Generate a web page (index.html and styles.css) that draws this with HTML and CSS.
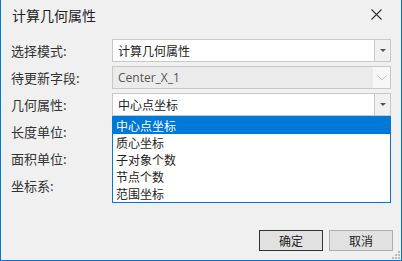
FILE: index.html
```html
<!DOCTYPE html>
<html>
<head>
    <meta charset="UTF-8">
    <title>计算几何属性</title>
    <link rel="stylesheet" href="styles.css">
</head>
<body>
    <div class="dialog">
        <div class="titlebar">
            <span class="title">计算几何属性</span>
            <svg class="close" width="11" height="11" viewBox="0 0 11 11">
                <path d="M0.5 0.5 L10.5 10.5 M10.5 0.5 L0.5 10.5" stroke="#333" stroke-width="1.1" fill="none"/>
            </svg>
        </div>
        <div class="form">
            <div class="row">
                <label>选择模式:</label>
                <div class="combo">
                    <div class="value">计算几何属性</div>
                    <div class="btn"><i class="tri"></i></div>
                </div>
            </div>
            <div class="row">
                <label>待更新字段:</label>
                <div class="combo disabled">
                    <div class="value">Center_X_1</div>
                    <div class="btn">
                        <svg width="10" height="6" viewBox="0 0 10 6"><path d="M0.5 0.5 L5 5 L9.5 0.5" stroke="#c4c4c4" fill="none"/></svg>
                    </div>
                </div>
            </div>
            <div class="row">
                <label>几何属性:</label>
                <div class="combo">
                    <div class="value">中心点坐标</div>
                    <div class="btn"><i class="tri"></i></div>
                </div>
            </div>
            <div class="row"><label>长度单位:</label></div>
            <div class="row"><label>面积单位:</label></div>
            <div class="row"><label>坐标系:</label></div>

            <!-- open list of the 几何属性 box -->
            <ul class="droplist">
                <li class="sel">中心点坐标</li>
                <li>质心坐标</li>
                <li>子对象个数</li>
                <li>节点个数</li>
                <li>范围坐标</li>
            </ul>
        </div>
        <div class="footer">
            <button type="button" class="default">确定</button>
            <button type="button">取消</button>
        </div>
        <svg class="grip" width="8" height="8" viewBox="0 0 8 8">
            <rect x="6" y="0" width="2" height="2" fill="#bbb"/>
            <rect x="3" y="3" width="2" height="2" fill="#bbb"/>
            <rect x="6" y="3" width="2" height="2" fill="#bbb"/>
            <rect x="0" y="6" width="2" height="2" fill="#bbb"/>
            <rect x="3" y="6" width="2" height="2" fill="#bbb"/>
            <rect x="6" y="6" width="2" height="2" fill="#bbb"/>
        </svg>
    </div>
</body>
</html>
```

FILE: styles.css
```css
body {
    margin: 0;
    background-color: #f0f0f0;
    font-family: "Noto Sans CJK SC", "Liberation Sans", sans-serif;
    color: #333;
}
.dialog {
    position: relative;
    width: 400px;
    height: 260px;
    border: 1px solid #0078d7;
    border-top: 0;
    background-color: #f0f0f0;
    display: flex;
    flex-direction: column;
}
.titlebar {
    height: 39px;
    display: flex;
    align-items: flex-start;
    justify-content: space-between;
    padding: 0 19px 0 11px;
}
.title {
    font-size: 14px;
    line-height: 30px;
    color: #222;
}
.close {
    margin-top: 9px;
}
.form {
    position: relative;
    padding: 0 10px 0 10px;
    display: flex;
    flex-direction: column;
    gap: 4px;
}
.row {
    display: flex;
    align-items: center;
    height: 23px;
}
label {
    width: 101px;
    font-size: 13px;
    color: #333;
}
.combo {
    flex: 1;
    height: 21px;
    display: flex;
    border: 1px solid #c8c8c8;
    background-color: white;
}
.combo .value {
    flex: 1;
    font-size: 12px;
    line-height: 21px;
    padding-left: 5px;
    color: #222;
}
.combo .btn {
    width: 15px;
    border-left: 1px solid #c8c8c8;
    background-color: #f0f0f0;
    display: flex;
    align-items: center;
    justify-content: center;
}
.tri {
    width: 0;
    height: 0;
    border-left: 3px solid transparent;
    border-right: 3px solid transparent;
    border-top: 3px solid #555;
}
.combo.disabled {
    background-color: #f7f7f7;
}
.combo.disabled .value {
    background-color: #ebebeb;
    font-family: "Open Sans", "Noto Sans", sans-serif;
    color: #555;
    font-size: 12px;
}
.combo.disabled .btn {
    width: 17px;
    border-left: 0;
    background-color: #f7f7f7;
}
.droplist {
    position: absolute;
    left: 111px;
    top: 77px;
    width: 277px;
    margin: 0;
    padding: 0;
    list-style: none;
    border: 1px solid #0078d7;
    background-color: white;
}
.droplist li {
    height: 17px;
    line-height: 17px;
    font-size: 12px;
    padding-left: 3px;
    color: #222;
}
.droplist li.sel {
    background-color: #0078d7;
    color: white;
}
.footer {
    margin-top: auto;
    display: flex;
    justify-content: flex-end;
    gap: 6px;
    padding: 0 8px 9px 0;
}
button {
    width: 64px;
    height: 21px;
    font-family: "Noto Sans CJK SC", sans-serif;
    font-size: 12px;
    color: #222;
    background-color: #e1e1e1;
    border: 1px solid #adadad;
    padding: 0;
}
button.default {
    border: 1px solid #333;
    width: 64px;
}
.grip {
    position: absolute;
    right: 1px;
    bottom: 1px;
}
```
